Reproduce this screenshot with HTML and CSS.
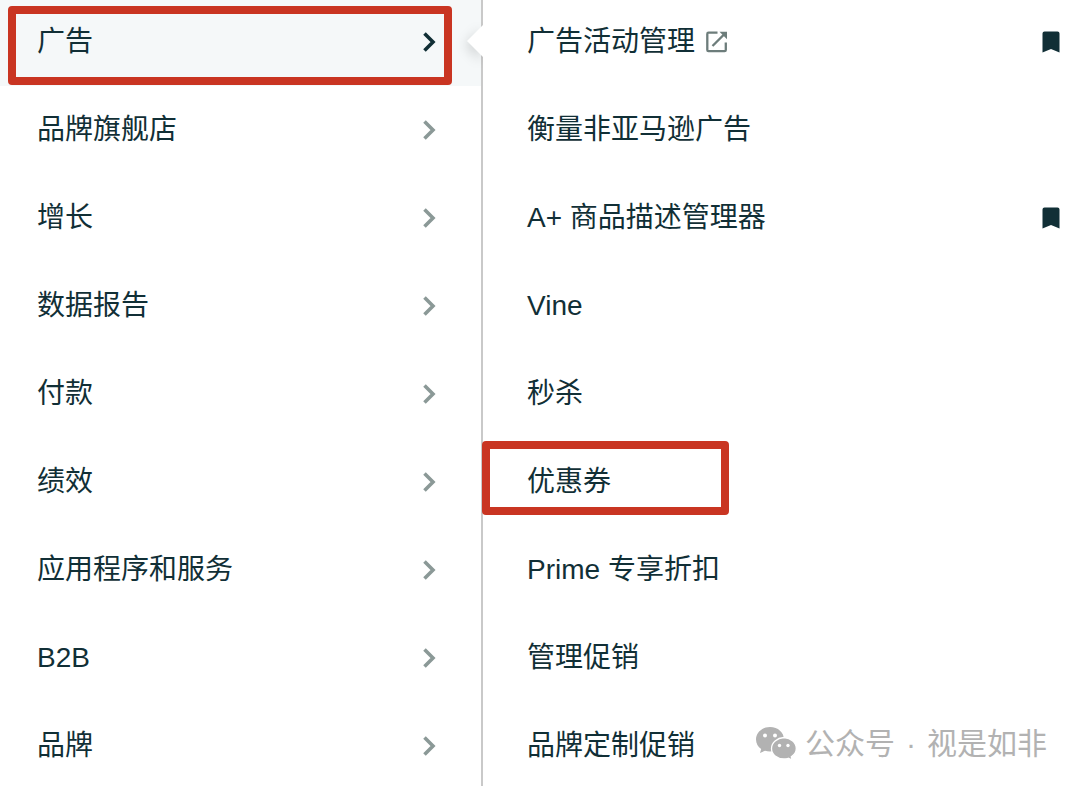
FILE: index.html
```html
<!DOCTYPE html>
<html lang="zh-CN">
    <head>
        <meta charset="utf-8">
        <title>广告</title>
        <link rel="stylesheet" href="styles.css">
    </head>

    <body>
        <!-- shared icons -->
        <svg class="sprite" aria-hidden="true">
            <symbol id="chevron" viewBox="0 0 14 20">
                <path d="M1.500 1.500L10 10L1.500 18.500" fill="none" stroke="currentColor" stroke-width="3.600"/>
            </symbol>
            <symbol id="bookmark" viewBox="0 0 18 22">
                <path d="M2.500 0.500H15.500A2 2 0 0 1 17.500 2.500V21.500L9 18L0.500 21.500V2.500A2 2 0 0 1 2.500 0.500Z" fill="currentColor"/>
            </symbol>
        </svg>

        <div class="menu">
            <nav class="categories">
                <a href="#" class="item active">广告<svg class="chevron"><use href="#chevron"/></svg><span class="mark mark-category"></span></a>
                <a href="#" class="item">品牌旗舰店<svg class="chevron"><use href="#chevron"/></svg></a>
                <a href="#" class="item">增长<svg class="chevron"><use href="#chevron"/></svg></a>
                <a href="#" class="item">数据报告<svg class="chevron"><use href="#chevron"/></svg></a>
                <a href="#" class="item">付款<svg class="chevron"><use href="#chevron"/></svg></a>
                <a href="#" class="item">绩效<svg class="chevron"><use href="#chevron"/></svg></a>
                <a href="#" class="item">应用程序和服务<svg class="chevron"><use href="#chevron"/></svg></a>
                <a href="#" class="item">B2B<svg class="chevron"><use href="#chevron"/></svg></a>
                <a href="#" class="item">品牌<svg class="chevron"><use href="#chevron"/></svg></a>
            </nav>

            <nav class="pages">
                <svg class="pointer" viewBox="0 0 16 32"><path d="M16 0L0 16L16 32Z" fill="#fff"/></svg>
                <a href="#" class="item">广告活动管理
                    <svg class="external" viewBox="0 0 22 22">
                        <path d="M11.500 1.700H2.500Q1.300 1.700 1.300 2.900V19Q1.300 20.200 2.500 20.200H18.600Q19.800 20.200 19.800 19V11.500M18.500 3L6.500 15" fill="none" stroke="currentColor" stroke-width="2.300"/>
                        <path d="M13.500 0.800H21V8.300Z" fill="currentColor"/>
                    </svg>
                    <svg class="bookmark"><use href="#bookmark"/></svg>
                </a>
                <a href="#" class="item">衡量非亚马逊广告</a>
                <a href="#" class="item">A+ 商品描述管理器<svg class="bookmark"><use href="#bookmark"/></svg></a>
                <a href="#" class="item">Vine</a>
                <a href="#" class="item">秒杀</a>
                <a href="#" class="item">优惠券<span class="mark mark-page"></span></a>
                <a href="#" class="item">Prime 专享折扣</a>
                <a href="#" class="item">管理促销</a>
                <a href="#" class="item">品牌定制促销</a>
            </nav>
        </div>

        <div class="watermark">
            <svg class="wechat" viewBox="0 0 42 36">
                <path d="M15 1C7 1 1 6.500 1 13.500C1 17.500 3 20.800 6.200 23L5 27L10 24.700C11.500 25.200 13.200 25.500 15 25.500C23 25.500 29 20.500 29 13.500C29 6.500 23 1 15 1Z" fill="#b2b2b2"/>
                <path d="M29 11.500C22 12 16.500 16.500 16.500 22.500C16.500 28.500 22 33 29 33C30.500 33 32 32.800 33.300 32.300L37.300 34.200L36.300 30.800C39.300 28.800 41.300 26 41.300 22.500C41.300 16.500 36 12 29 11.500Z" fill="#b2b2b2" stroke="#fff" stroke-width="1.300"/>
                <circle cx="10" cy="9.500" r="2" fill="#fff"/>
                <circle cx="20" cy="9.500" r="2" fill="#fff"/>
                <circle cx="24.500" cy="19.500" r="1.700" fill="#fff"/>
                <circle cx="33" cy="19.500" r="1.700" fill="#fff"/>
            </svg>
            <p class="account"><span>公众号</span><span>·</span><span>视是如非</span></p>
        </div>
    </body>
</html>
```
FILE: styles.css
```css
* {
  box-sizing: border-box;
}
body {
  margin: 0;
  background-color: #fff;
  color: #112f36;
  font-family: "Liberation Sans", "Noto Sans CJK SC", sans-serif;
  font-size: 28px;
  line-height: 40px;
}
.sprite {
  display: none;
}
.menu {
  display: flex;
  height: 100vh;
  overflow: hidden;
}
.categories {
  flex: 0 0 483px;
  border-right: 2px solid #c9c9c9;
}
.pages {
  position: relative;
  flex: 1;
}
.item {
  position: relative;
  display: flex;
  align-items: center;
  height: 88px;
  color: inherit;
  text-decoration: none;
}
/* the list is scrolled slightly past its top edge */
.item:first-of-type {
  margin-top: -2px;
}
.categories .item {
  padding: 0 44px 0 37px;
}
.pages .item {
  padding: 0 20px 0 44px;
}
.active {
  background-color: #f5f8f9;
}
.chevron {
  width: 14px;
  height: 20px;
  margin-left: auto;
  color: #8b9997;
}
.active .chevron {
  color: #112f36;
}
.external {
  width: 22px;
  height: 22px;
  margin-left: 11px;
  color: #6d7d7b;
}
.bookmark {
  width: 18px;
  height: 22px;
  margin-left: auto;
}
/* notch that joins the open category to its pages */
.pointer {
  position: absolute;
  z-index: 1;
  top: 25px;
  left: -16px;
  width: 16px;
  height: 32px;
  overflow: visible;
  filter: drop-shadow(-2px 4px 6px rgba(0, 0, 0, 0.15));
  clip-path: inset(-20px 0 -20px -20px);
}
/* red highlight frames */
.mark {
  position: absolute;
  z-index: 2;
  border: 8px solid #c93522;
  border-radius: 4px;
}
.mark-category {
  top: 8px;
  right: 29px;
  bottom: 1px;
  left: 8px;
}
.mark-page {
  top: 3px;
  left: -1px;
  width: 247px;
  height: 74px;
}
.watermark {
  position: absolute;
  right: 33px;
  bottom: 22px;
  display: flex;
  align-items: center;
  gap: 8px;
  color: #b2b2b2;
  font-size: 30px;
}
.account {
  display: flex;
  gap: 11px;
  margin: 0;
}
.wechat {
  width: 42px;
  height: 36px;
}
```
